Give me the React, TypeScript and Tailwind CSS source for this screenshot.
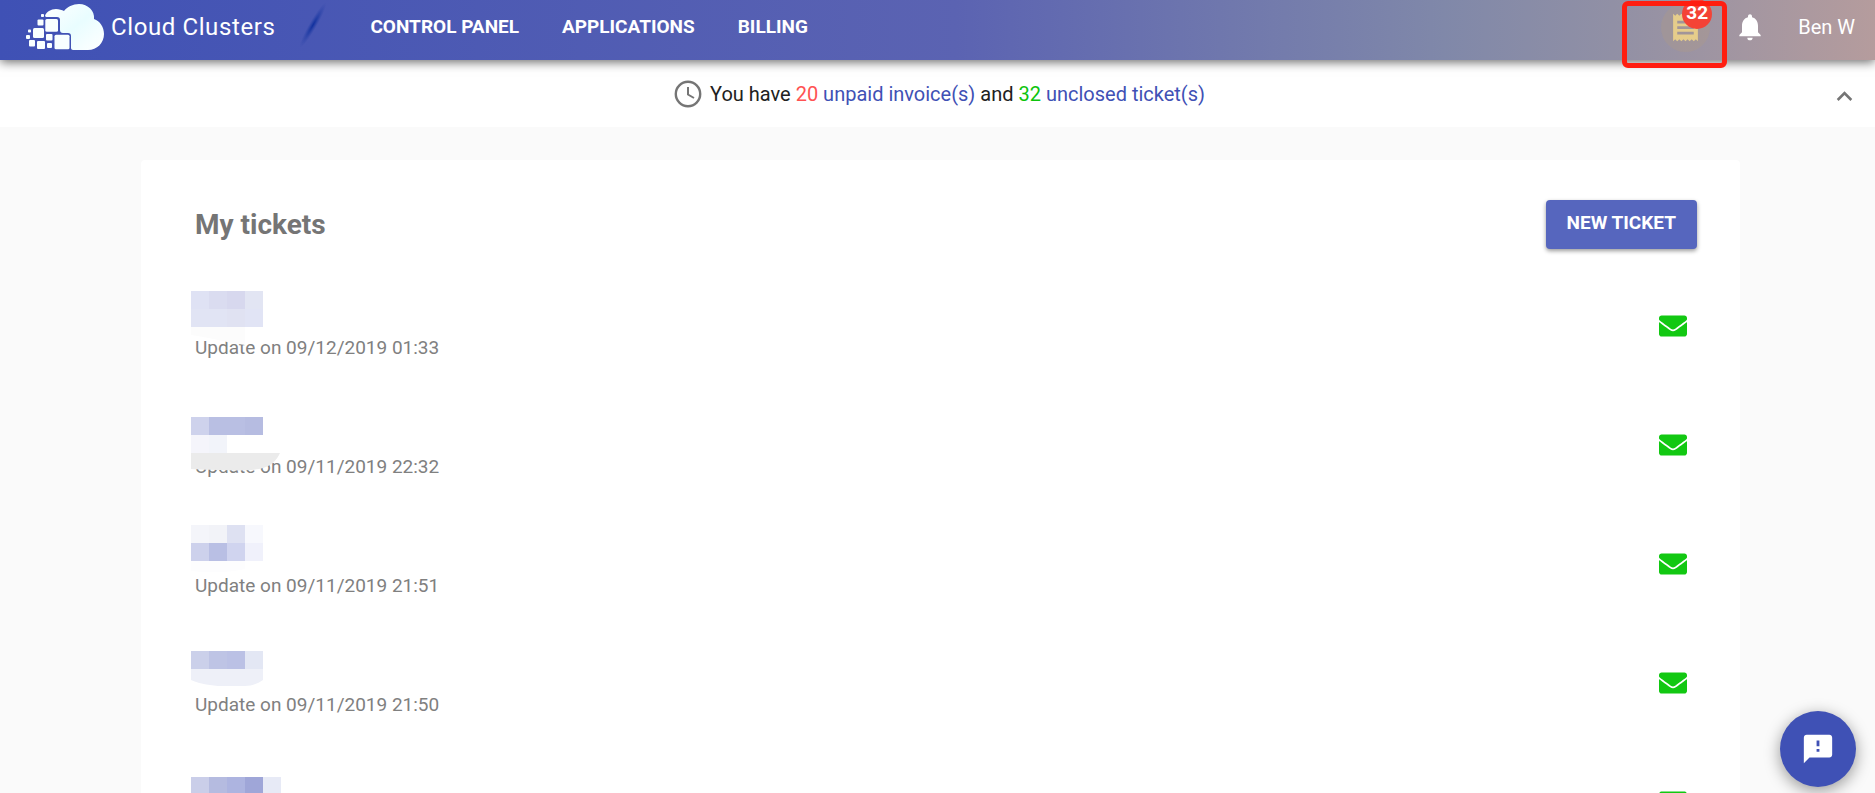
import { FaEnvelope } from "react-icons/fa";
import { MdFeedback, MdNotifications, MdReceipt, MdKeyboardArrowUp } from "react-icons/md";

type Tile = [x: number, y: number, width: number, height: number, color: string];

type Ticket = { updated: string; tiles: Tile[]; edge?: { d: string; color: string } };

const tickets: Ticket[] = [
  {
    updated: "09/12/2019 01:33",
    tiles: [
      [0, 24, 18, 18, "#dfe2f4"],
      [18, 24, 18, 18, "#dadcf0"],
      [36, 24, 18, 18, "#d7d8ee"],
      [54, 24, 18, 18, "#e2e5f3"],
      [0, 42, 36, 18, "#e1e4f4"],
      [36, 42, 18, 18, "#e0e2f2"],
      [54, 42, 18, 18, "#e1e4f5"],
    ],
    edge: { d: "M0 60H54V78C36 76 18 70 0 68Z", color: "#fcfcfc" },
  },
  {
    updated: "09/11/2019 22:32",
    tiles: [
      [0, 31, 18, 18, "#ced2ec"],
      [18, 31, 36, 18, "#b9bfe3"],
      [54, 31, 18, 18, "#b6bce1"],
      [0, 49, 18, 18, "#f5f5fb"],
      [18, 49, 18, 18, "#f2f4fa"],
    ],
    edge: { d: "M0 67H89C86 74 80 80 72 82C60 86 20 84 0 83Z", color: "#ebebeb" },
  },
  {
    updated: "09/11/2019 21:51",
    tiles: [
      [0, 20, 18, 18, "#f4f5fa"],
      [18, 20, 18, 18, "#f2f3f8"],
      [36, 20, 18, 18, "#dee1f2"],
      [54, 20, 18, 18, "#f7f8fd"],
      [0, 38, 18, 18, "#cdd1ec"],
      [18, 38, 18, 18, "#b9bfe4"],
      [36, 38, 18, 18, "#d0d4ef"],
      [54, 38, 18, 18, "#f0f1fb"],
    ],
    edge: { d: "M0 56H54V64C36 68 18 68 0 66Z", color: "#fdfdfe" },
  },
  {
    updated: "09/11/2019 21:50",
    tiles: [
      [0, 27, 18, 18, "#cbd0ea"],
      [18, 27, 18, 18, "#bec4e5"],
      [36, 27, 18, 18, "#bbc1e5"],
      [54, 27, 18, 18, "#e3e7f4"],
    ],
    edge: { d: "M0 45H72V56C66 60 60 62 54 62H27C16 61 6 59 0 56Z", color: "#eef0f8" },
  },
  {
    updated: "09/11/2019 21:48",
    tiles: [
      [0, 34, 18, 18, "#cacee9"],
      [18, 34, 18, 18, "#b5bbe0"],
      [36, 34, 18, 18, "#adb4e0"],
      [54, 34, 18, 18, "#9fa6d8"],
      [72, 34, 18, 18, "#e7eaf6"],
    ],
  },
];

function Logo() {
  return (
    <svg viewBox="0 0 78 46" className="h-[46px] w-[78px]" aria-hidden="true">
      <defs>
        <linearGradient id="cloud" x1="0" y1="0" x2="1" y2="1">
          <stop offset="0" stopColor="#ffffff" />
          <stop offset="0.5" stopColor="#e9fdff" />
          <stop offset="1" stopColor="#ffffff" />
        </linearGradient>
      </defs>
      <path
        d="M19 12C20 8 25 5 30 5C33 5 36 6 38 7C41 3 47 0 53 0C62 0 69 7 68 15C74 17 78 23 78 30C78 39 71 46 62 46H47C46 46 45 45 45 44V32C45 30 44 29 42 29H37C35 29 34 28 34 26V16C34 14 33 13 31 13H20Z"
        fill="url(#cloud)"
      />
      <g fill="#f8ffff">
        <rect x="19.3" y="15" width="12.700" height="12.700" rx="1.500" />
        <rect x="28.500" y="30.700" width="15" height="14.600" rx="1.500" />
        <rect x="7" y="24" width="11" height="10" rx="1.500" />
        <rect x="20" y="30" width="6.500" height="6.500" rx="1" />
        <rect x="11" y="37" width="8" height="8" rx="1" />
        <rect x="3" y="36" width="6" height="6.500" rx="1" />
        <rect x="21" y="39" width="5" height="5" rx="1" />
        <rect x="11.500" y="15.500" width="6" height="6" rx="1" />
        <rect x="15" y="10" width="3" height="3" rx="0.800" />
        <rect x="0" y="31" width="4" height="4" rx="1" />
        <rect x="2" y="25.500" width="3" height="3" rx="0.800" />
      </g>
    </svg>
  );
}

function Slash() {
  return (
    <svg viewBox="0 0 28 50" className="ml-6 h-[50px] w-7" aria-hidden="true">
      <defs>
        <radialGradient id="slash">
          <stop offset="0" stopColor="#0f2f9e" />
          <stop offset="0.400" stopColor="#1a38a2" stopOpacity="0.650" />
          <stop offset="1" stopColor="#2c43a8" stopOpacity="0" />
        </radialGradient>
      </defs>
      <ellipse cx="14" cy="25" rx="26" ry="4" transform="rotate(-60 14 25)" fill="url(#slash)" />
    </svg>
  );
}

function Header() {
  return (
    <header className="relative z-10 flex h-[60px] items-start bg-[linear-gradient(90deg,#3f51b5_0%,#5b63b2_51%,#8088a9_77%,#9190a5_86%,#b59c9d_100%)] text-white shadow-[0_2px_10px_rgba(0,0,0,0.6)]">
      <a href="#home" className="flex h-[54px] items-center gap-[7px] pl-[26px] text-2xl tracking-wide">
        <Logo />
        Cloud Clusters
      </a>
      <Slash />
      <nav className="ml-[43px] flex h-[54px] items-center gap-[43px] text-[19px] font-bold">
        <a href="#panel">CONTROL PANEL</a>
        <a href="#applications">APPLICATIONS</a>
        <a href="#billing">BILLING</a>
      </nav>
      <div className="ml-auto flex h-[54px] items-center pr-5">
        <button
          type="button"
          aria-label="Tickets"
          className="relative flex size-[49px] items-center justify-center rounded-full bg-[#b09a88]/35 text-[#e6cd8b]"
        >
          <MdReceipt className="size-[33px]" />
          <span className="absolute -top-1 left-[21px] flex size-[30px] items-center justify-center rounded-full bg-[#f44336] text-[19px] font-bold text-white">
            32
          </span>
        </button>
        <button type="button" aria-label="Notifications" className="ml-6">
          <MdNotifications className="size-8" />
        </button>
        <a href="#account" className="ml-8 text-xl">
          Ben W
        </a>
      </div>
      <div className="pointer-events-none absolute top-px right-[148px] h-[67px] w-[105px] rounded-md border-5 border-[#ff1e10]" />
    </header>
  );
}

function Notice() {
  return (
    <section className="relative flex h-[67px] items-center justify-center bg-white pl-1 text-xl text-[#212121]">
      <svg viewBox="0 0 28 28" className="mr-2 size-7" fill="none" stroke="#757575" aria-hidden="true">
        <circle cx="14" cy="14" r="12.200" strokeWidth="2.400" />
        <path d="M14 7V14.500L20 18" strokeWidth="2" />
      </svg>
      <p>
        You have <span className="text-[#ff5252]">20</span>{" "}
        <a href="#invoices" className="text-[#3f51b5]">
          unpaid invoice(s)
        </a>{" "}
        and <span className="text-[#0dc40d]">32</span>{" "}
        <a href="#tickets" className="text-[#3f51b5]">
          unclosed ticket(s)
        </a>
      </p>
      <button type="button" aria-label="Collapse" className="absolute top-[21px] right-[15px] text-[#757575]">
        <MdKeyboardArrowUp className="size-[31px]" />
      </button>
    </section>
  );
}

function TicketRow({ ticket }: { ticket: Ticket }) {
  return (
    <li className="relative flex h-[119px] items-center justify-between pr-[10px]">
      <p className="pt-[43px] text-[19px] text-[#808080]">Update on {ticket.updated}</p>
      <svg viewBox="0 0 90 119" className="absolute top-0 -left-1 h-[119px] w-[90px]" aria-hidden="true">
        {ticket.edge && <path d={ticket.edge.d} fill={ticket.edge.color} />}
        {ticket.tiles.map(([x, y, width, height, color]) => (
          <rect key={`${x}-${y}`} x={x} y={y} width={width} height={height} fill={color} shapeRendering="crispEdges" />
        ))}
      </svg>
      <FaEnvelope className="mb-[2px] size-7 text-[#12c812]" />
    </li>
  );
}

export default function App() {
  return (
    <div className="h-screen overflow-hidden bg-[#fafafa] font-[Roboto,sans-serif]">
      <Header />
      <Notice />
      <main className="mt-[33px] mr-[135px] ml-[141px] rounded bg-white pt-10 pr-[43px] pl-[54px]">
        <div className="flex items-center justify-between">
          <h1 className="text-[28px] font-bold text-[#757575]">My tickets</h1>
          <button
            type="button"
            className="h-[49px] rounded bg-[#5666be] px-[21px] pb-[2px] text-[19px] font-bold text-white shadow-[0_2px_4px_rgba(0,0,0,0.4)]"
          >
            NEW TICKET
          </button>
        </div>
        <ul className="mt-[18px]">
          {tickets.map((ticket) => (
            <TicketRow key={ticket.updated} ticket={ticket} />
          ))}
        </ul>
      </main>
      <button
        type="button"
        aria-label="Send feedback"
        className="fixed right-[19px] bottom-[6px] flex size-[76px] items-center justify-center rounded-full bg-[#3f51b5] text-white shadow-[0_4px_16px_rgba(0,0,0,0.4)]"
      >
        <MdFeedback className="size-[34px]" />
      </button>
    </div>
  );
}
